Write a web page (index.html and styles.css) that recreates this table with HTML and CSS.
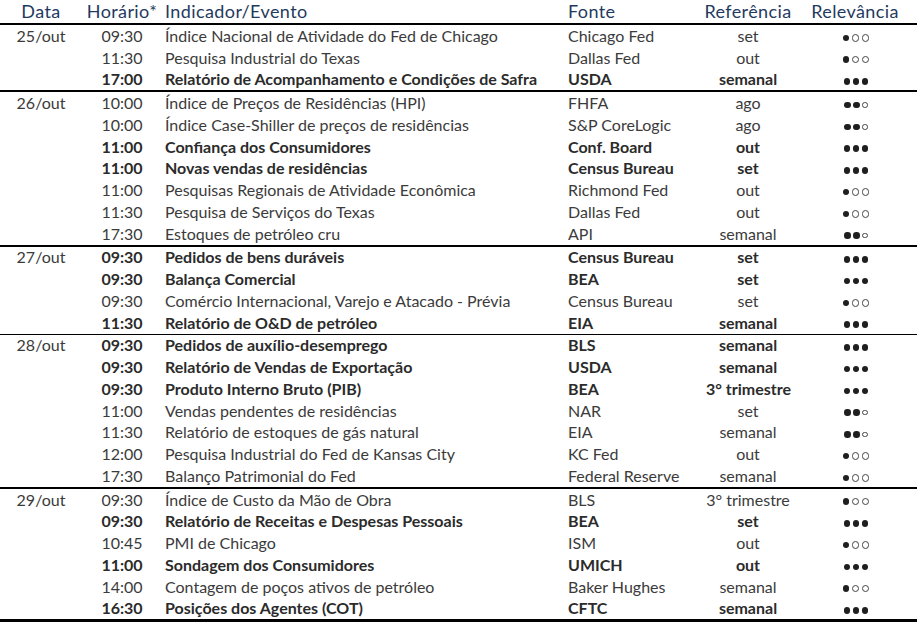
FILE: index.html
```html
<!DOCTYPE html>
<html lang="pt-BR">
<head>
<meta charset="utf-8">
<title>Agenda</title>
<link rel="stylesheet" href="styles.css">
</head>
<body>
<table class="agenda">
  <colgroup>
    <col class="c-date"><col class="c-time"><col class="c-event"><col class="c-src"><col class="c-ref"><col class="c-rel">
  </colgroup>
  <thead>
    <tr><th class="ctr">Data</th><th class="ctr">Horário*</th><th class="lft">Indicador/Evento</th><th class="lft">Fonte</th><th class="ctr">Referência</th><th class="ctr">Relevância</th></tr>
  </thead>
  <tbody class="grp">
    <tr><td class="ctr">25/out</td><td class="ctr">09:30</td><td>Índice Nacional de Atividade do Fed de Chicago</td><td>Chicago Fed</td><td class="ctr">set</td><td class="ctr"><span class="dots"><i class="d f"></i><i class="d e"></i><i class="d e"></i></span></td></tr>
    <tr><td></td><td class="ctr">11:30</td><td>Pesquisa Industrial do Texas</td><td>Dallas Fed</td><td class="ctr">out</td><td class="ctr"><span class="dots"><i class="d f"></i><i class="d e"></i><i class="d e"></i></span></td></tr>
    <tr class="b"><td></td><td class="ctr">17:00</td><td>Relatório de Acompanhamento e Condições de Safra</td><td>USDA</td><td class="ctr">semanal</td><td class="ctr"><span class="dots"><i class="d f"></i><i class="d f"></i><i class="d f"></i></span></td></tr>
  </tbody>
  <tbody class="grp">
    <tr><td class="ctr">26/out</td><td class="ctr">10:00</td><td>Índice de Preços de Residências (HPI)</td><td>FHFA</td><td class="ctr">ago</td><td class="ctr"><span class="dots"><i class="d f"></i><i class="d f"></i><i class="d s"></i></span></td></tr>
    <tr><td></td><td class="ctr">10:00</td><td>Índice Case-Shiller de preços de residências</td><td>S&amp;P CoreLogic</td><td class="ctr">ago</td><td class="ctr"><span class="dots"><i class="d f"></i><i class="d f"></i><i class="d s"></i></span></td></tr>
    <tr class="b"><td></td><td class="ctr">11:00</td><td>Confiança dos Consumidores</td><td>Conf. Board</td><td class="ctr">out</td><td class="ctr"><span class="dots"><i class="d f"></i><i class="d f"></i><i class="d f"></i></span></td></tr>
    <tr class="b"><td></td><td class="ctr">11:00</td><td>Novas vendas de residências</td><td>Census Bureau</td><td class="ctr">set</td><td class="ctr"><span class="dots"><i class="d f"></i><i class="d f"></i><i class="d f"></i></span></td></tr>
    <tr><td></td><td class="ctr">11:00</td><td>Pesquisas Regionais de Atividade Econômica</td><td>Richmond Fed</td><td class="ctr">out</td><td class="ctr"><span class="dots"><i class="d f"></i><i class="d e"></i><i class="d e"></i></span></td></tr>
    <tr><td></td><td class="ctr">11:30</td><td>Pesquisa de Serviços do Texas</td><td>Dallas Fed</td><td class="ctr">out</td><td class="ctr"><span class="dots"><i class="d f"></i><i class="d e"></i><i class="d e"></i></span></td></tr>
    <tr><td></td><td class="ctr">17:30</td><td>Estoques de petróleo cru</td><td>API</td><td class="ctr">semanal</td><td class="ctr"><span class="dots"><i class="d f"></i><i class="d f"></i><i class="d s"></i></span></td></tr>
  </tbody>
  <tbody class="grp">
    <tr class="b"><td class="ctr nb">27/out</td><td class="ctr">09:30</td><td>Pedidos de bens duráveis</td><td>Census Bureau</td><td class="ctr">set</td><td class="ctr"><span class="dots"><i class="d f"></i><i class="d f"></i><i class="d f"></i></span></td></tr>
    <tr class="b"><td></td><td class="ctr">09:30</td><td>Balança Comercial</td><td>BEA</td><td class="ctr">set</td><td class="ctr"><span class="dots"><i class="d f"></i><i class="d f"></i><i class="d f"></i></span></td></tr>
    <tr><td></td><td class="ctr">09:30</td><td>Comércio Internacional, Varejo e Atacado - Prévia</td><td>Census Bureau</td><td class="ctr">set</td><td class="ctr"><span class="dots"><i class="d f"></i><i class="d e"></i><i class="d e"></i></span></td></tr>
    <tr class="b"><td></td><td class="ctr">11:30</td><td>Relatório de O&amp;D de petróleo</td><td>EIA</td><td class="ctr">semanal</td><td class="ctr"><span class="dots"><i class="d f"></i><i class="d f"></i><i class="d f"></i></span></td></tr>
  </tbody>
  <tbody class="grp thin">
    <tr class="b"><td class="ctr nb">28/out</td><td class="ctr">09:30</td><td>Pedidos de auxílio-desemprego</td><td>BLS</td><td class="ctr">semanal</td><td class="ctr"><span class="dots"><i class="d f"></i><i class="d f"></i><i class="d f"></i></span></td></tr>
    <tr class="b"><td></td><td class="ctr">09:30</td><td>Relatório de Vendas de Exportação</td><td>USDA</td><td class="ctr">semanal</td><td class="ctr"><span class="dots"><i class="d f"></i><i class="d f"></i><i class="d f"></i></span></td></tr>
    <tr class="b"><td></td><td class="ctr">09:30</td><td>Produto Interno Bruto (PIB)</td><td>BEA</td><td class="ctr">3° trimestre</td><td class="ctr"><span class="dots"><i class="d f"></i><i class="d f"></i><i class="d f"></i></span></td></tr>
    <tr><td></td><td class="ctr">11:00</td><td>Vendas pendentes de residências</td><td>NAR</td><td class="ctr">set</td><td class="ctr"><span class="dots"><i class="d f"></i><i class="d f"></i><i class="d s"></i></span></td></tr>
    <tr><td></td><td class="ctr">11:30</td><td>Relatório de estoques de gás natural</td><td>EIA</td><td class="ctr">semanal</td><td class="ctr"><span class="dots"><i class="d f"></i><i class="d f"></i><i class="d s"></i></span></td></tr>
    <tr><td></td><td class="ctr">12:00</td><td>Pesquisa Industrial do Fed de Kansas City</td><td>KC Fed</td><td class="ctr">out</td><td class="ctr"><span class="dots"><i class="d f"></i><i class="d e"></i><i class="d e"></i></span></td></tr>
    <tr><td></td><td class="ctr">17:30</td><td>Balanço Patrimonial do Fed</td><td>Federal Reserve</td><td class="ctr">semanal</td><td class="ctr"><span class="dots"><i class="d f"></i><i class="d e"></i><i class="d e"></i></span></td></tr>
  </tbody>
  <tbody class="grp last">
    <tr><td class="ctr">29/out</td><td class="ctr">09:30</td><td>Índice de Custo da Mão de Obra</td><td>BLS</td><td class="ctr">3° trimestre</td><td class="ctr"><span class="dots"><i class="d f"></i><i class="d e"></i><i class="d e"></i></span></td></tr>
    <tr class="b"><td></td><td class="ctr">09:30</td><td>Relatório de Receitas e Despesas Pessoais</td><td>BEA</td><td class="ctr">set</td><td class="ctr"><span class="dots"><i class="d f"></i><i class="d f"></i><i class="d f"></i></span></td></tr>
    <tr><td></td><td class="ctr">10:45</td><td>PMI de Chicago</td><td>ISM</td><td class="ctr">out</td><td class="ctr"><span class="dots"><i class="d f"></i><i class="d e"></i><i class="d e"></i></span></td></tr>
    <tr class="b"><td></td><td class="ctr">11:00</td><td>Sondagem dos Consumidores</td><td>UMICH</td><td class="ctr">out</td><td class="ctr"><span class="dots"><i class="d f"></i><i class="d f"></i><i class="d f"></i></span></td></tr>
    <tr><td></td><td class="ctr">14:00</td><td>Contagem de poços ativos de petróleo</td><td>Baker Hughes</td><td class="ctr">semanal</td><td class="ctr"><span class="dots"><i class="d f"></i><i class="d e"></i><i class="d e"></i></span></td></tr>
    <tr class="b"><td></td><td class="ctr">16:30</td><td>Posições dos Agentes (COT)</td><td>CFTC</td><td class="ctr">semanal</td><td class="ctr"><span class="dots"><i class="d f"></i><i class="d f"></i><i class="d f"></i></span></td></tr>
  </tbody>
</table>
</body>
</html>
```

FILE: styles.css
```css
html, body {
  margin: 0;
  padding: 0;
  background: #ffffff;
}

body {
  font-family: "Lato", "Open Sans", "DejaVu Sans", sans-serif;
  font-size: 16px;
  color: #3b3b3b;
}

.agenda {
  width: 917px;
  border-collapse: collapse;
  table-layout: fixed;
  border-bottom: 3px solid #000;
}

.c-date { width: 82px; }
.c-time { width: 80px; }
.c-event { width: 403px; }
.c-src { width: 138px; }
.c-ref { width: 90px; }
.c-rel { width: 124px; }

.agenda th {
  height: 21px;
  padding: 0 0 2px;
  font-weight: 400;
  font-size: 18px;
  letter-spacing: 0.4px;
  line-height: 19px;
  color: #1f3a60;
  vertical-align: bottom;
  border-bottom: 2px solid #000;
  white-space: nowrap;
}

.agenda th.lft {
  padding-left: 3px;
}

.agenda td {
  height: 21.75px;
  padding: 0 3px;
  vertical-align: middle;
  white-space: nowrap;
  line-height: 18px;
}

.agenda .grp {
  border-top: 2px solid #000;
}

.agenda thead + .grp {
  border-top: none;
}

.agenda .thin {
  border-top-width: 1px;
}

.ctr { text-align: center; }
.lft { text-align: left; }

.b td {
  font-weight: 700;
  color: #2b2b2b;
}

.b td.nb {
  font-weight: 400;
  color: #3b3b3b;
}

.dots {
  display: inline-flex;
  align-items: center;
  gap: 2.5px;
  vertical-align: middle;
  transform: translateX(1px);
}

.d {
  display: block;
  box-sizing: border-box;
  border-radius: 50%;
}

.d.f {
  width: 6.5px;
  height: 6.5px;
  background: #1f1f1f;
}

.d.e {
  width: 7.5px;
  height: 7.5px;
  border: 1px solid #444;
}

.d.s {
  width: 5.5px;
  height: 5.5px;
  border: 1px solid #444;
}
```
